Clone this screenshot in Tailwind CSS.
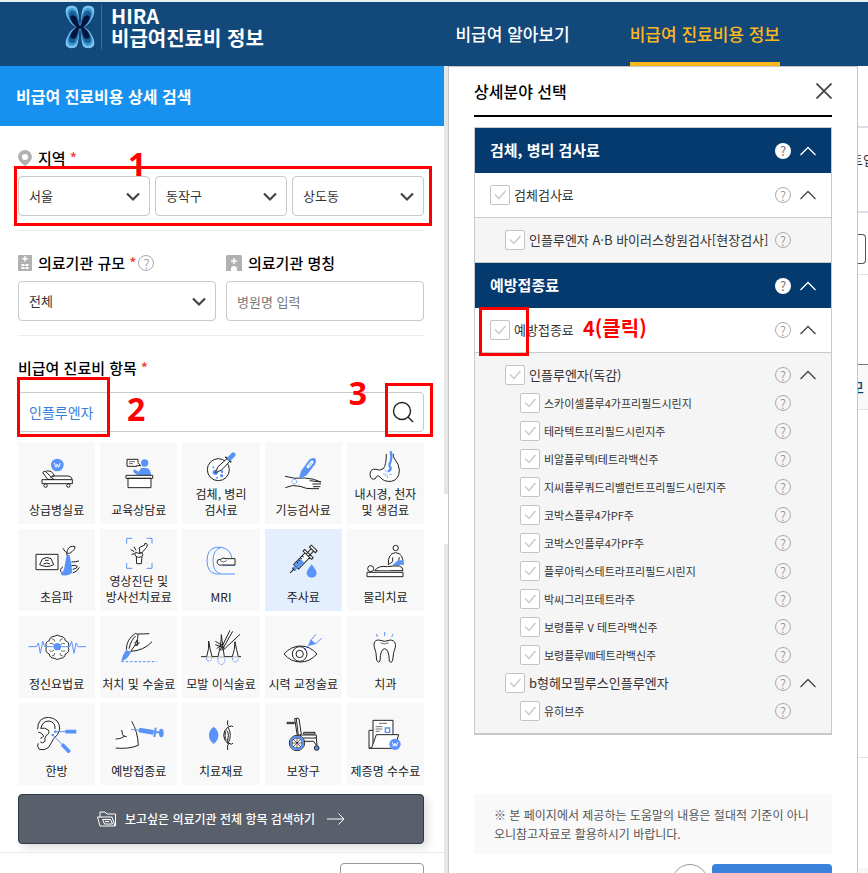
<!DOCTYPE html>
<html lang="ko">
<head>
    <meta charset="UTF-8">
    <meta name="viewport" content="width=device-width, initial-scale=1.0">
    <title>비급여 진료비용 상세 검색</title>
    <script src="https://cdn.jsdelivr.net/npm/@tailwindcss/browser@4"></script>
</head>
<body class="h-screen overflow-hidden bg-white font-['Noto_Sans_CJK_KR',sans-serif] text-[13px] text-[#333] flex flex-col">

    <!-- Header -->
    <header class="flex h-[66px] shrink-0 border-t-2 border-[#e9eef3] bg-[#13487a] pl-[65px] pr-[88px]">
        <a href="#" class="flex items-start pt-[3px] text-white">
            <svg class="h-11 w-[30px]" viewBox="196 12 90 134">
                <defs>
                    <g id="lobe">
                        <path fill="#7cc6f2" d="M241 79C226 80 214 72 206 56C196 40 196 26 200 20C206 12 226 12 231 20C238 30 236 60 241 79z"/>
                        <path fill="#3b9bd1" d="M241 79C226 78 216 70 209 56C200 40 202 28 208 24C216 18 227 22 231 32C236 44 238 64 241 79z"/>
                        <path fill="#1a5f97" d="M241 80C228 78 218 70 212 58C204 44 206 34 212 31C220 27 228 32 231 42C235 52 238 66 241 80z"/>
                        <path fill="#04143c" d="M241 82C230 79 221 72 216 62C209 50 212 43 218 43C226 42 231 50 233 58C235 68 238 74 241 82z"/>
                    </g>
                </defs>
                <use href="#lobe"/>
                <use href="#lobe" transform="matrix(-1 0 0 1 482 0)"/>
                <use href="#lobe" transform="matrix(1 0 0 -1 0 158)"/>
                <use href="#lobe" transform="matrix(-1 0 0 -1 482 158)"/>
                <path d="M230 79h22" stroke="#04143c" stroke-width="8"/>
            </svg>
            <span class="ml-1.5 h-11 border-l border-[#41709c] pl-[9px] text-[20px] font-bold leading-[22px]">HIRA<br>비급여진료비 정보</span>
        </a>
        <nav class="ml-auto flex gap-15 text-[17px] font-medium">
            <a href="#" class="flex items-center text-white">비급여 알아보기</a>
            <a href="#" class="flex items-center border-b-4 border-[#fdb71a] pt-1 text-[#fdb71a]">비급여 진료비용 정보</a>
        </nav>
    </header>

    <main class="grid min-h-0 flex-1 grid-cols-[444fr_4fr_410fr_10fr] overflow-hidden">

        <!-- Search form -->
        <section class="min-w-0">
            <h1 class="flex h-15 items-center bg-[#1691ef] px-4 text-[16px] font-bold text-white">비급여 진료비용 상세 검색</h1>

            <form class="pl-[18px] pr-5" onsubmit="return false">
                <fieldset class="border-b border-[#ececec] pb-3.5 pt-5">
                    <div class="mb-1.5 flex h-6 items-center gap-1.5 text-[15px] font-medium text-black">
                        <svg class="h-4 w-3.5" viewBox="0 0 14 16"><path fill="#b1b1b1" fill-rule="evenodd" d="M7 0a7 7 0 0 1 7 7c0 3-3 6-7 9C3 13 0 10 0 7a7 7 0 0 1 7-7zm0 4a3 3 0 1 0 0 6 3 3 0 0 0 0-6z"/></svg>
                        <span>지역 <span class="text-[#f03c2d]">*</span></span>
                    </div>
                    <div class="relative grid grid-cols-3 gap-[5px]">
                        <div class="relative">
                            <select aria-label="시도" class="h-10 w-full appearance-none rounded border border-[#c8c8cd] bg-white px-2.5"><option>서울</option></select>
                            <svg class="pointer-events-none absolute right-2.5 top-4 h-2.5 w-3.5" viewBox="0 0 14 10" fill="none" stroke="#444" stroke-width="2.2"><path d="M1 1.500l6 6 6-6"/></svg>
                        </div>
                        <div class="relative">
                            <select aria-label="시군구" class="h-10 w-full appearance-none rounded border border-[#c8c8cd] bg-white px-2.5"><option>동작구</option></select>
                            <svg class="pointer-events-none absolute right-2.5 top-4 h-2.5 w-3.5" viewBox="0 0 14 10" fill="none" stroke="#444" stroke-width="2.2"><path d="M1 1.500l6 6 6-6"/></svg>
                        </div>
                        <div class="relative">
                            <select aria-label="읍면동" class="h-10 w-full appearance-none rounded border border-[#c8c8cd] bg-white px-2.5"><option>상도동</option></select>
                            <svg class="pointer-events-none absolute right-2.5 top-4 h-2.5 w-3.5" viewBox="0 0 14 10" fill="none" stroke="#444" stroke-width="2.2"><path d="M1 1.500l6 6 6-6"/></svg>
                        </div>
                        <!-- Step 1 -->
                        <div class="pointer-events-none absolute -bottom-2.5 -left-1 -right-2 -top-2.5 border-3 border-[#f00]"></div>
                        <span class="pointer-events-none absolute -top-7 left-27.5 font-['Noto_Sans',sans-serif] text-[32px] font-bold leading-8 text-[#f00]">1</span>
                    </div>
                </fieldset>

                <div class="grid grid-cols-2 gap-x-2.5 border-b border-[#ececec] pb-3.5 pt-5">
                    <div>
                        <div class="mb-1.5 flex h-6 items-center gap-1.5 text-[15px] font-medium text-black">
                            <svg class="h-4 w-3.5" viewBox="0 0 14 16"><rect width="14" height="16" rx="1" fill="#b1b1b1"/><path fill="#fff" d="M6.300 1h1.400v2h2v1.400h-2v2H6.300v-2h-2V3h2zM3.500 9h3v2h-3zm4 0h3v2h-3zm-4 3h3v2h-3zm4 0h3v2h-3z"/></svg>
                            <label for="size">의료기관 규모 <span class="text-[#f03c2d]">*</span></label>
                            <button type="button" aria-label="도움말" class="-ml-1 flex size-4 items-center justify-center rounded-full border border-[#aaa] text-[13px] font-light leading-none text-[#888]">?</button>
                        </div>
                        <div class="relative">
                            <select id="size" class="h-10 w-full appearance-none rounded border border-[#c8c8cd] bg-white px-2.5"><option>전체</option></select>
                            <svg class="pointer-events-none absolute right-2.5 top-4 h-2.5 w-3.5" viewBox="0 0 14 10" fill="none" stroke="#444" stroke-width="2.2"><path d="M1 1.500l6 6 6-6"/></svg>
                        </div>
                    </div>
                    <div>
                        <div class="mb-1.5 flex h-6 items-center gap-1.5 text-[15px] font-medium text-black">
                            <svg class="h-4 w-4" viewBox="0 0 16 16"><path fill="#b1b1b1" d="M1 0h14l1 1v15h-5v-2a3 3 0 0 0-6 0v2H0V1z"/><path fill="#fff" d="M7.300 3h1.400v2.300H11v1.400H8.700V9H7.300V6.700H5V5.300h2.300z"/></svg>
                            <label for="hospital">의료기관 명칭</label>
                        </div>
                        <input id="hospital" type="text" placeholder="병원명 입력" class="h-10 w-full rounded border border-[#c8c8cd] px-2.5 placeholder:text-[#777]">
                    </div>
                </div>

                <div class="pt-5">
                    <label for="keyword" class="mb-3 flex h-6 items-center gap-1 text-[15px] font-medium text-black">비급여 진료비 항목 <span class="text-[#f03c2d]">*</span></label>
                    <div class="relative flex h-10 rounded border border-[#c8c8cd]">
                        <input id="keyword" type="text" value="인플루엔자" class="min-w-0 flex-1 px-2.5 text-[14px] text-[#3a7fdd]">
                        <button type="button" aria-label="검색" class="flex w-10 items-center justify-center">
                            <svg class="size-[22px]" viewBox="0 0 22 22" fill="none" stroke="#222" stroke-width="1.400"><circle cx="10" cy="10" r="8.500"/><path d="M16 16l5 5"/></svg>
                        </button>
                        <!-- Steps 2 and 3 -->
                        <div class="pointer-events-none absolute -bottom-1.5 -left-0.5 -top-4 w-[93px] border-3 border-[#f00]"></div>
                        <span class="pointer-events-none absolute left-27 top-0 font-['Noto_Sans',sans-serif] text-[32px] font-bold leading-8 text-[#f00]">2</span>
                        <span class="pointer-events-none absolute -top-4 right-14 font-['Noto_Sans',sans-serif] text-[32px] font-bold leading-8 text-[#f00]">3</span>
                        <div class="pointer-events-none absolute -bottom-1.5 -right-2.5 -top-2.5 w-12 border-3 border-[#f00]"></div>
                    </div>
                </div>

                <div id="categories" class="mt-2.5 grid grid-cols-5 gap-[5px]"></div>

                <button type="button" class="mt-[9px] flex h-[50px] w-full items-center justify-center rounded border border-[#2f3a48] bg-[#59606b] text-[12px] font-medium text-white shadow-[4px_4px_8px_rgba(0,0,0,0.12)]">
                    <svg class="mr-2 h-4 w-5" viewBox="0 0 20 16" fill="none" stroke="#fff" stroke-width="1"><path d="M3 15L.5 6H15l3 9zM3 6V1h5l2 2h8.500v12M5.500 8.500h8l2 4.500h-8zM8 10.500h4"/></svg>
                    보고싶은 의료기관 전체 항목 검색하기
                    <svg class="ml-3 h-3 w-[18px]" viewBox="0 0 18 12" fill="none" stroke="#fff"><path d="M0 6h17M11.500.5L17 6l-5.500 5.500"/></svg>
                </button>
            </form>

            <div class="mt-2 flex justify-end border-t border-[#e9e9e9] pr-5 pt-2.5">
                <select aria-label="정렬" class="h-9 w-21 appearance-none rounded border border-[#999] bg-white"></select>
            </div>
        </section>

        <div class="bg-[#e6e6e6] pt-107"><div class="h-[50px] w-full bg-white"></div></div>

        <!-- Detail selection -->
        <section class="min-w-0 border border-b-0 border-[#c6c6c6] px-[25px]">
            <div class="flex h-[50px] items-center justify-between border-b-2 border-black">
                <h2 class="text-[16px] font-medium text-black">상세분야 선택</h2>
                <button type="button" aria-label="닫기"><svg class="size-4" viewBox="0 0 16 16" stroke="#444" stroke-width="1.800"><path d="M.5.5l15 15M15.500.5l-15 15"/></svg></button>
            </div>

            <div id="tree" class="mt-2.5 border border-b-2 border-[#c9c9c9]"></div>

            <p class="mt-[59px] bg-[#f9f9f9] px-5 py-[11px] text-[12px] leading-[19px] text-[#555]">※ 본 페이지에서 제공하는 도움말의 내용은 절대적 기준이 아니<br>오니참고자료로 활용하시기 바랍니다.</p>

            <div class="mt-2.5 flex justify-end gap-1">
                <button type="button" aria-label="초기화" class="size-9 rounded-full border border-[#999]"></button>
                <button type="button" aria-label="선택완료" class="h-10 w-30 rounded bg-[#3a82db]"></button>
            </div>
        </section>

        <!-- Edge of the result page behind the dialog -->
        <div class="overflow-hidden">
            <div class="h-15"></div>
            <div class="flex h-[87px] items-center justify-center whitespace-nowrap border-y-2 border-[#dcdfe8] pb-5">트입</div>
            <div class="h-[21px]"></div>
            <div class="h-[30px] w-2 rounded-r border border-l-0 border-[#555]"></div>
            <div class="h-2.5"></div>
            <div class="h-[90px] border-t border-[#e3e3e3]"></div>
            <div class="flex h-[46px] items-center justify-end whitespace-nowrap border-b border-t border-b-[#e3e3e3] border-t-[#777] bg-[#f8f8f8] pr-1 text-[14px] font-medium text-[#13406d]">모</div>
            <div class="h-[347px]"></div>
            <div class="h-[111px] border-t border-[#e3e3e3]"></div>
            <div class="h-10 bg-[#f7f7f7]"></div>
        </div>
    </main>

    <script>
        const K = 'stroke="#222"';
        const B = 'stroke="#5a93f8"';
        const F = 'fill="#5a93f8" stroke="none"';
        const W = 'fill="#fff"';

        // label lines, viewBox origin, drawing
        const categories = [
            ['상급병실료', '50 48', `<circle ${F} cx="141" cy="75" r="19"/><path stroke="#fff" stroke-width="3" d="M132 69l5 13 4-10 4 10 5-13"/><path ${K} ${W} d="M112 118L97 97l7-4 26 25zM108 93q18-2 24 14l-12 5M125 108h45q15 0 15 11M95 119h91v12H95z"/><g ${K} ${W}><circle cx="106" cy="137" r="5"/><circle cx="174" cy="137" r="5"/></g>`],
            ['교육상담료', '296 48', `<path ${K} ${W} d="M350 58h33v10l8 9h-12v2h-29z"/><path ${K} stroke-width="2" d="M356 65h18M356 71h12"/><circle ${F} cx="403" cy="69" r="11"/><path ${F} d="M392 84h17q13 3 13 23h-34q-16-4-20-15l5-4q8 8 13 6z"/><path ${K} ${W} d="M347 106h80v9h-80zM353 115h69v28h-69z"/>`],
            ['검체, 병리<br>검사료', '543 24', `<circle ${K} ${W} cx="625" cy="89" r="33"/><g ${F}><circle cx="616" cy="97" r="8"/><circle cx="635" cy="107" r="5"/><circle cx="636" cy="95" r="4"/><circle cx="621" cy="113" r="3"/><circle cx="610" cy="82" r="3"/></g><path ${K} ${W} d="M616 98l8-18 28-25 8 8-25 27z"/><path ${K} stroke-width="4" d="M646 50l18 17"/><path ${B} stroke-width="14" stroke-linecap="round" d="M659 55l11-11"/>`],
            ['기능검사료', '160 48', `<path ${W} stroke="none" d="M196 109q30 9 58 5l50 12v18h-25q-40-15-83-2z"/><path ${K} d="M196 109q30 9 58 5 28 1 50 12M197 143q22-11 44-4 22 9 36 7h21M270 122l34 4M278 132h26M280 140h22"/><path ${F} d="M237 118l7-25 24-33q9-9 18-5 6 7 0 18l-25 33z"/><path stroke="#fff" stroke-width="9" stroke-linecap="round" d="M265 80l12-14"/><path ${B} stroke-width="3" d="M268 77l6-8"/><circle ${B} stroke-dasharray="4 2" cx="224" cy="125" r="7"/>`],
            ['내시경, 천자<br>및 생검료', '406 24', `<path ${K} ${W} d="M500 42q0 34-9 44-11 8-22 2-18-3-18 16 2 18 16 12 5-15 15-4 10 14 33 12 24-5 24-34-1-18-13-31-6-8-6-18"/><path ${B} stroke-width="7" d="M513 34q4 18 0 30-7 10 0 20 0 8-9 10"/><path ${B} stroke-width="2" d="M494 88l8 9M490 102h9M508 102l10 2M503 106v9M496 110l5-6"/>`],

            ['초음파', '50 309', `<path ${K} ${W} d="M77 343h66v46H77z"/><path ${K} d="M97 356q14-7 25 0l8 18q-20 11-42 0zM99 372q11-6 20 0M104 361h11"/><path ${F} d="M169 345h9q5 28 8 50-5 13-31 11-6-3-2-8 8-4 9-15z"/><path ${K} d="M158 325q10 18 20 15 18-12 16-20-18-5-23 12-3 6-1 14M183 366q12 0 23-3M158 380q-12 8-5 17M183 377q12-3 18 2 0 7-14 9M187 399q14-4 20-17"/>`],
            ['영상진단 및<br>방사선치료료', '296 285', `<path ${B} d="M349 311v-16h17M409 295h16v16M349 369v16h17M409 385h16v-16"/><path ${K} ${W} d="M388 330q-5-8 4-10l10-4 1-5q7-3 8 4l-3 8-10 11q-2 7-10 5zM379 371l-1-21q-8-8-2-13 9 6 18 1 7 4 1 12l-2 21z"/><path ${K} stroke-width="3" d="M361 329l11 6M371 320l6 11M364 343l9-2M377 350q8 4 17 0"/>`],
            ['MRI', '543 309', `<path ${B} d="M618 322q-27 5-27 40t27 40h12M635 322q-26 5-26 40t24 40h42M618 322h17q26 5 31 33M638 376h37"/><path ${K} ${W} d="M675 356h-27q-10-5-16 2-10-1-11 8 3 11 13 9h41z"/><path ${K} stroke-width="2" d="M630 362q10 8 20 0"/>`],
            ['주사료', '160 309', `<g transform="translate(249 360) rotate(-46)"><path ${K} ${W} d="M-28-10h48v20h-48zM20-5h22M20 5h22M20-18h7v36h-7zM42-12h8v24h-8z"/><path ${F} d="M-26-8H-2V8h-24zM-39-6h10V6h-10z"/><path ${K} d="M-54 0h14M-39-6v12M-16-10v6M-8-10v6M0-10v6M8-10v6"/></g><path ${F} d="M276 373q15 20 15 26a15 14 0 0 1-30 0q0-7 15-26z"/>`],
            ['물리치료', '406 309', `<circle ${K} ${W} cx="528" cy="324" r="8"/><path ${K} ${W} d="M506 374q-2-34 22-36 24 2 22 36"/><path ${F} d="M518 375l17-14h15v12l-17 4z"/><path ${K} d="M519 352v13l-13 9M539 352l-2 9"/><path ${K} ${W} d="M465 392q10-16 38-12l18-2h18q11 3 11 14zM442 397h108v13H442z"/><circle ${K} ${W} cx="453" cy="386" r="9"/><path stroke="#777" d="M478 392h34"/>`],

            ['정신요법료', '50 54', `<path ${K} ${W} d="M108 106q-5-16 9-20 1-12 15-13 9-7 18 0 14 1 15 13 14 4 9 20 5 15-9 20-1 12-15 13-9 7-18 0-14-1-15-13-14-5-9-20z"/><path ${K} stroke-width="2" d="M124 80q10 0 9 9M158 80q-10 0-9 9M118 95q9-3 13 3M164 95q-9-3-13 3M124 132q10 0 9-9M158 132q-10 0-9-9M118 117q9 3 13-3M164 117q-9 3-13-3"/><path ${B} d="M54 104h24l6-11 6 31 7-36 6 16h75l6-16 7 36 6-31 6 11h24"/><circle ${F} cx="141" cy="104" r="11"/>`],
            ['처치 및 수술료', '296 54', `<path ${W} stroke="none" d="M372 66l52-2v26l-60 30z"/><path ${B} stroke-dasharray="8 5" d="M333 149h106"/><path ${F} d="M333 148q3-20 15-34l14 6q-9 22-29 28z"/><path ${K} d="M348 113q0-32 28-49l7 4q1 22-22 50M356 110q6-26 20-38M383 66q18 0 34-1M361 118q40-2 64-29M372 94l10-10v16h-8M378 98l10-6"/>`],
            ['모발 이식술료', '543 54', `<path ${K} d="M573 134h120"/><path ${K} ${W} d="M590 134q8-24 6-47 4 26 10 47M624 134q10-40 10-66 4 36 9 66M667 134q8-22 8-45 4 24 10 45"/><path ${B} stroke-dasharray="5 3" d="M589 138q1 9 8 9t8-9M624 138q-2 18 10 20 12-2 10-20M667 138q1 12 9 12t9-12"/><path ${K} d="M630 116l30-61M635 116l33-58M640 114l50-47M616 98l28 10M620 110l20-16M616 88l24 14"/>`],
            ['시력 교정술료', '160 54', `<path ${K} ${W} d="M193 126q22-24 50-24t49 24q-22 24-50 24t-49-24z"/><circle ${K} cx="240" cy="126" r="22"/><circle ${K} cx="240" cy="126" r="11"/><path ${B} d="M253 114l16-16"/><path ${F} d="M265 102l8-20 16 14z"/><path ${B} d="M275 83l14-16M288 96l18-18"/>`],
            ['치과', '406 54', `<path ${K} ${W} d="M464 106q-5-22 13-22 18 8 36 0 17 2 14 22-6 12-8 38-4 12-10 3-1-36-14-37-13 1-14 37-6 8-10-3-1-26-7-38z"/><path ${K} stroke-width="2" d="M483 93q13 6 24-1"/><path ${B} d="M495 60v12M470 66l4 9M520 66l-4 9"/>`],

            ['한방', '50 315', `<path ${W} stroke="none" d="M84 350q0-34 32-34 33 5 32 36-4 20-18 30-14 34-40 32-12-12-2-24z"/><path ${K} d="M82 352q0-36 33-36 34 4 33 36-4 18-18 28-8 14-15 26-12 11-28 6-9-10-3-18M92 348q4-21 24-21 20 4 18 24M90 349q14-3 24 5 6 10-7 17-5 8-3 17-7 8-14 2M84 360q12 2 16 12-4 6-10 7"/><path ${B} d="M135 359h32M127 369l30 30"/><path ${B} stroke-width="11" d="M165 359h33M155 397l23 24"/><g ${F}><circle cx="135" cy="359" r="4"/><circle cx="127" cy="369" r="4"/></g>`],
            ['예방접종료', '296 315', `<path ${W} stroke="none" d="M364 328q18 32 20 72-34 12-68 8v-28z"/><path ${K} d="M364 328q18 30 20 72-30 12-68 8M316 381q20-1 26-9M334 354q2 16 6 18l9 2"/><path ${B} d="M362 352l30 3"/><path ${B} stroke-width="14" d="M386 354l43 7"/><path ${B} stroke-width="6" d="M429 361h22M436 347l-4 28"/><ellipse ${F} cx="453" cy="363" rx="7" ry="13"/>`],
            ['치료재료', '543 315', `<path ${F} d="M611 344q14 10 14 26t-14 26q-14-10-14-26t14-26z"/><path ${W} stroke="none" d="M650 344l20 2v48l-20 2z"/><path ${K} d="M653 325q-3 15 4 19 8-4 12 0M653 414q-3-16 4-20 8 5 12 0M654 345q-13 10-13 25t13 25q-2-8 0-14M654 345q14 24 0 50"/><ellipse ${K} cx="650" cy="370" rx="5" ry="14"/>`],
            ['보장구', '160 315', `<path ${K} ${W} d="M225 320q8-4 13 1l7 46-12 5zM242 369h48v9h-46zM252 361h34v5h-34z"/><path ${K} d="M202 331h22v4h-22zM230 320l6 50M290 378l2 22M250 388h32l8 12"/><circle ${K} ${W} cx="232" cy="393" r="23"/><circle ${B} stroke-width="6" cx="232" cy="393" r="19"/><circle ${K} stroke-width="2" cx="232" cy="393" r="15"/><path ${K} stroke-width="2" d="M232 378v30M217 393h30M221 382l22 22M243 382l-22 22"/><circle ${K} fill="#5a93f8" cx="291" cy="408" r="7"/>`],
            ['제증명 수수료', '406 315', `<path ${K} ${W} d="M460 395v-70h60v55M448 409v-54h12"/><path ${K} stroke-width="2" d="M478 334h24M468 344h20M468 351h20M468 358h12"/><path ${B} ${W} stroke-width="4" d="M497 348h13v13h-13z"/><path ${K} ${W} d="M470 368h67l-12 41h-77l8-2z"/><circle ${F} cx="526" cy="397" r="17"/><path stroke="#fff" stroke-width="3" d="M518 391l4 12 4-9 4 9 4-12"/>`]
        ];

        document.getElementById('categories').innerHTML = categories.map(([label, origin, art]) => `
            <button type="button" class="flex h-[82px] flex-col items-center whitespace-nowrap pb-1.5 pt-1 text-[12px] leading-4 text-[#222] ${label === '주사료' ? 'bg-[#e4effd]' : 'bg-[#f8f8f8]'}">
                <span class="flex flex-1 items-center"><svg class="h-9 w-15" viewBox="${origin} 180 108" fill="none" stroke-width="3">${art}</svg></span>
                <span>${label}</span>
            </button>`).join('');

        const help = '<button type="button" aria-label="도움말" class="flex size-4 shrink-0 items-center justify-center rounded-full border border-[#aaa] text-[13px] font-light leading-none text-[#888]">?</button>';
        const chevron = (color) => `<button type="button" aria-label="접기" class="w-4 shrink-0"><svg class="h-2.5 w-4" viewBox="0 0 16 10" fill="none" stroke="${color}" stroke-width="1.300"><path d="M.5 9L8 1.500 15.500 9"/></svg></button>`;

        // Section title bar
        function bar(name) {
            return `
                <div class="flex h-[45px] items-center gap-[9px] bg-[#043a6e] px-[15px] text-white">
                    <h3 class="flex-1 text-[15px] font-bold">${name}</h3>
                    <button type="button" aria-label="도움말" class="flex size-4 items-center justify-center rounded-full bg-white text-[13px] leading-none text-[#777]">?</button>
                    ${chevron('#fff')}
                </div>`;
        }

        // One tick box row
        const indent = ['h-11 pl-[15px] text-[13px]', 'h-7 pl-[30px] text-[13px]', 'h-7 pl-[45px] text-[11px]'];
        function row(level, name, open, extra = '') {
            return `
                <div class="relative flex items-center gap-[9px] pr-[15px] ${indent[level]}">
                    <label class="flex min-w-0 flex-1 items-center gap-1 whitespace-nowrap">
                        <span class="grid shrink-0">
                            <input type="checkbox" class="col-start-1 row-start-1 size-5 appearance-none rounded-xs border border-[#c4c4c4] bg-white">
                            <svg class="pointer-events-none col-start-1 row-start-1 size-5" viewBox="0 0 20 20" fill="none" stroke="#c8c8c8" stroke-width="1.400"><path d="M5 9.500l4 4 6.500-7.500"/></svg>
                        </span>
                        ${name}
                    </label>
                    ${help}
                    ${open ? chevron('#444') : '<span class="w-4 shrink-0"></span>'}
                    ${extra}
                </div>`;
        }

        // Step 4
        const step4 = `
            <div class="pointer-events-none absolute -bottom-1 -top-px left-1 w-[50px] border-3 border-[#f00]"></div>
            <span class="pointer-events-none absolute left-27 top-1.5 text-[20px] font-bold leading-7 text-[#f00]">4(클릭)</span>`;

        document.getElementById('tree').innerHTML =
            bar('검체, 병리 검사료') +
            row(0, '검체검사료', true) +
            '<div class="border-y border-[#c9c9c9] bg-[#f5f5f5] py-2">' +
            row(1, '인플루엔자 A·B 바이러스항원검사[현장검사]', false) +
            '</div>' +
            bar('예방접종료') +
            row(0, '예방접종료', true, step4) +
            '<div class="border-t border-[#c9c9c9] bg-[#f5f5f5] py-2">' +
            row(1, '인플루엔자(독감)', true) +
            ['스카이셀플루4가프리필드시린지', '테라텍트프리필드시린지주', '비알플루텍I테트라백신주', '지씨플루쿼드리밸런트프리필드시린지주',
                '코박스플루4가PF주', '코박스인플루4가PF주', '플루아릭스테트라프리필드시린지', '박씨그리프테트라주',
                '보령플루 V 테트라백신주', '보령플루Ⅷ테트라백신주'].map(name => row(2, name, false)).join('') +
            row(1, 'b형헤모필루스인플루엔자', true) +
            row(2, '유히브주', false) +
            '</div>';
    </script>
</body>
</html>
